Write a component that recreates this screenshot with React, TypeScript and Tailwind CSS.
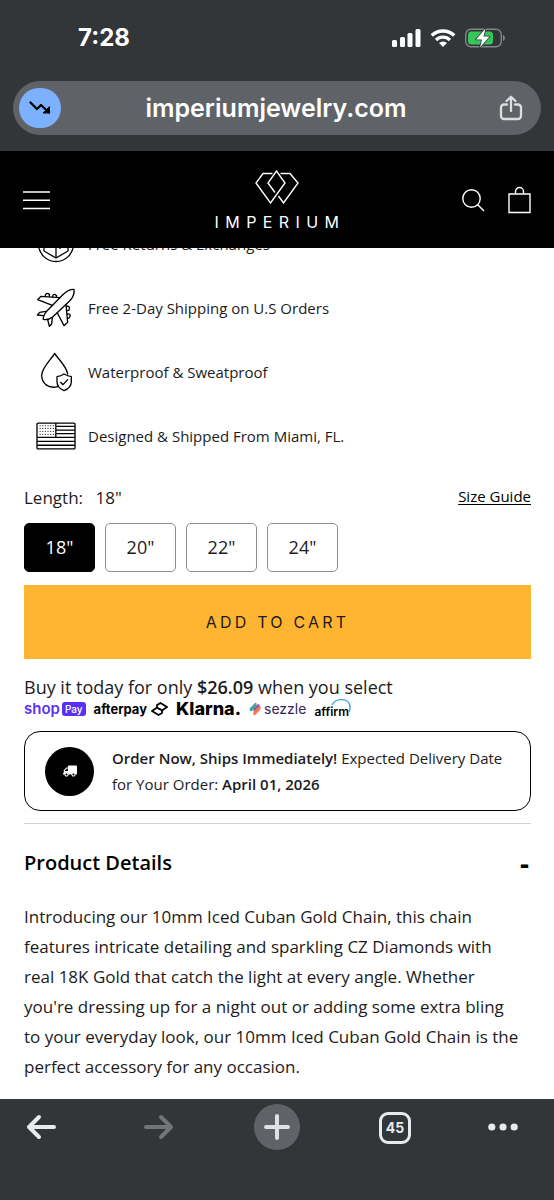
import { useState } from 'react';
import { FaTruck } from 'react-icons/fa';

const features = [
    { label: 'Free Returns & Exchanges', icon: <ReturnsIcon /> },
    { label: 'Free 2-Day Shipping on U.S Orders', icon: <PlaneIcon /> },
    { label: 'Waterproof & Sweatproof', icon: <DropIcon /> },
    { label: 'Designed & Shipped From Miami, FL.', icon: <FlagIcon /> },
];

const lengths = ['18"', '20"', '22"', '24"'];

function ReturnsIcon() {
    return (
        <svg viewBox="0 0 40 40" className="h-10 w-10" fill="none" stroke="black" strokeWidth="1.3">
            <circle cx="20" cy="20" r="17.5" />
            <path d="M20 7 32 13.500V27L20 34 8 27V13.500ZM8 13.500 20 20l12-6.500M20 20v14" />
            <path d="M24 25v-3l4-2" />
        </svg>
    );
}

function PlaneIcon() {
    return (
        <svg viewBox="48 57 120 120" className="h-10 w-10" fill="none" stroke="black" strokeWidth="4" strokeLinejoin="round" strokeLinecap="round">
            <path d="M162 61c2 14-4 26-14 36l-50 47c-9 7-19 9-28 7-1-9 4-17 10-24l50-51c9-9 19-16 32-15Z" />
            <path d="M119 86 63 82l-10 10 44 17" />
            <path d="M138 107l5 53-11 10-20-38" />
            <path d="M78 127l-19 3-7 8 18 2" />
            <path d="M97 146l-2 19-7 7-5-21" />
            <path d="M76 81c-1-5 4-9 9-7l3 2v6M98 84c-1-6 4-9 8-7l4 3-1 5" />
            <path d="M141 112c5-1 9 3 7 8l-2 4-4 1M143 135c5-1 9 3 7 7l-3 5-4 1" />
        </svg>
    );
}

function DropIcon() {
    return (
        <svg viewBox="48 250 120 120" className="h-10 w-10" fill="none" stroke="black" strokeWidth="4" strokeLinejoin="round" strokeLinecap="round">
            <path d="M113 354c-28 7-48-10-48-34 0-23 29-48 39-66 9 16 35 37 39 62" />
            <path d="M132 316c-7 5-13 7-21 8v15c0 13 8 21 21 27 14-6 22-14 22-27v-15c-8-1-15-4-22-8Z" />
            <path d="m122 341 7 7 14-15" />
        </svg>
    );
}

function FlagIcon() {
    return (
        <svg viewBox="46 461 121 84" className="h-7 w-10" fill="none" stroke="black" strokeWidth="4" strokeLinejoin="round">
            <rect x="49" y="464" width="115" height="78" rx="3" />
            <path d="M106 464v43M106 474h58M106 485h58M106 496h58M49 507h115M49 519h115M49 531h115" />
            <path d="M57 472h44M57 480h44M57 489h44M57 498h44" strokeWidth="3" strokeDasharray="3 5" />
        </svg>
    );
}

function StatusBar() {
    return (
        <div className="flex items-center justify-between px-[49px] pt-[24px] text-white">
            <span className="ml-[29px] text-[24px] leading-7 font-bold">7:28</span>
            <div className="flex items-center gap-[9px]">
                <svg viewBox="0 0 29 18" className="h-[18px] w-[29px]" fill="white">
                    <rect x="0" y="11" width="5" height="7" rx="1.500" />
                    <rect x="8" y="8" width="5" height="10" rx="1.500" />
                    <rect x="15.500" y="4" width="5" height="14" rx="1.500" />
                    <rect x="23.500" y="0" width="5" height="18" rx="1.500" />
                </svg>
                <svg viewBox="0 0 26 18" className="h-[18px] w-[26px]" fill="none" stroke="white" strokeWidth="3.400">
                    <path d="M1.800 6.500a16 16 0 0 1 22.400 0" />
                    <path d="M6 11a10 10 0 0 1 14 0" />
                    <path d="M13 18l-4-4a6 6 0 0 1 8 0Z" fill="white" stroke="none" />
                </svg>
                <svg viewBox="0 0 40 20" className="h-5 w-10">
                    <rect x="0.700" y="1.200" width="35.600" height="17.600" rx="5.500" fill="none" stroke="#84878a" strokeWidth="1.400" />
                    <path d="M38 7v6c2.500-1 2.500-5 0-6Z" fill="#84878a" />
                    <rect x="3" y="3.500" width="25" height="13" rx="3.500" fill="#34c759" />
                    <path d="M20.500.5 11 11.500h6l-2 8 9.500-11h-6Z" fill="white" stroke="#323639" strokeWidth="1.600" paintOrder="stroke" strokeLinejoin="round" />
                </svg>
            </div>
        </div>
    );
}

function AddressBar() {
    return (
        <div className="mx-[13px] mt-[29px] flex h-[54px] items-center justify-between rounded-full bg-[#5f6367] pr-[18px] pl-[6px]">
            <button aria-label="Price tracking" className="flex h-10 w-[42px] items-center justify-center rounded-full bg-[#7cb1ff]">
                <svg viewBox="0 0 22 14" className="h-[14px] w-[22px]" fill="none" stroke="black" strokeWidth="2.300" strokeLinecap="round" strokeLinejoin="round">
                    <path d="m1.500 1.500 6.500 6.500 4-4 8 7.500" />
                    <path d="M20.500 6v6h-6Z" fill="black" strokeWidth="1" />
                </svg>
            </button>
            <span className="pr-2 text-[25px] leading-8 font-semibold text-white">imperiumjewelry.com</span>
            <button aria-label="Share" className="flex h-10 w-6 items-center justify-center">
                <svg viewBox="0 0 24 26" className="h-[26px] w-6" fill="none" stroke="#dcdee0" strokeWidth="2.300" strokeLinecap="round" strokeLinejoin="round">
                    <path d="M8 9.500H5a3 3 0 0 0-3 3V21a3 3 0 0 0 3 3h14a3 3 0 0 0 3-3v-8.500a3 3 0 0 0-3-3h-3" />
                    <path d="M12 16V2M7.500 6 12 1.800 16.500 6" />
                </svg>
            </button>
        </div>
    );
}

function StoreHeader() {
    return (
        <header className="grid h-[97px] grid-cols-3 items-center bg-black px-[23px] pt-px text-white">
            <button aria-label="Open menu" className="justify-self-start">
                <svg viewBox="0 0 27 20" className="h-5 w-[27px]" stroke="white" strokeWidth="1.500">
                    <path d="M0 2h27M0 10.200h27M0 18.500h27" />
                </svg>
            </button>
            <a href="#" className="flex flex-col items-center gap-[10px]">
                <svg viewBox="0 0 44 34" className="h-[34px] w-11" fill="none" stroke="white" strokeWidth="1.400">
                    <path d="M17.500 3.500H8L1 13l14.500 20L30 13 21.500 1 13 13l7 9.500" />
                    <path d="M25.500 3.500H35L43 13 28.500 33l-5-7" />
                </svg>
                <span className="pl-1.5 font-[Inter] text-[16px] leading-4 tracking-[0.4em]">IMPERIUM</span>
            </a>
            <div className="flex items-center gap-[22px] justify-self-end">
                <button aria-label="Search">
                    <svg viewBox="0 0 24 24" className="h-6 w-6" fill="none" stroke="white" strokeWidth="1.400">
                        <circle cx="10.500" cy="10.500" r="8.700" />
                        <path d="m16.500 16.500 6.500 6.500" />
                    </svg>
                </button>
                <button aria-label="Cart">
                    <svg viewBox="0 0 24 28" className="h-7 w-6" fill="none" stroke="white" strokeWidth="1.400">
                        <path d="M2 8h21v18.500H2ZM8.500 8V5.500a4 4 0 0 1 8 0V8" />
                    </svg>
                </button>
            </div>
        </header>
    );
}

function PaymentLogos() {
    return (
        <div className="flex h-5 items-center font-[Inter] text-black">
            <span className="text-[15px] leading-4 font-semibold text-[#5a31f4]">shop</span>
            <span className="ml-0.5 rounded-[3px] bg-[#5a31f4] px-[3px] text-[10px] leading-[14px] font-medium text-white">Pay</span>
            <span className="ml-2 text-[13px] leading-4 font-bold">afterpay</span>
            <svg viewBox="0 0 17 16" className="ml-1 h-4 w-[17px]" fill="none" stroke="black" strokeWidth="1.800" strokeLinejoin="round">
                <path d="M6 6V4l3.500-2L16 6l-5 3.500-3-2" />
                <path d="M11 9.500v2.500L7.500 14 1 10l5-3.500 3 2" />
            </svg>
            <span className="ml-2 text-[18px] leading-5 font-extrabold">Klarna.</span>
            <svg viewBox="0 0 12 14" className="ml-2 h-[14px] w-3">
                <path d="M1 6 6 1c2-1 2 2 1 3L3 9C1 10 0 8 1 6Z" fill="#3aab8f" />
                <path d="M5 6 9 2c2 0 2 3 1 4L6 10C4 10 4 8 5 6Z" fill="#8b4fc2" />
                <path d="m5 9 5-5c2-1 2 2 1 4l-5 5c-2 1-2-2-1-4Z" fill="#f4774c" />
            </svg>
            <span className="ml-[3px] text-[14px] leading-4 text-[#392558]">sezzle</span>
            <span className="relative ml-2 pt-1.5 text-[12px] leading-4 font-semibold">
                affirm
                <svg viewBox="0 0 20 15" className="absolute top-0 -right-[2px] h-[15px] w-5" fill="none" stroke="#3b9fe6" strokeWidth="1.400">
                    <path d="M1 7C4 0 19-1 19 9c0 2 0 3-1 5" />
                </svg>
            </span>
        </div>
    );
}

function BrowserToolbar() {
    return (
        <nav className="grid h-[101px] grid-cols-[82fr_154fr_82fr_154fr_62fr_20fr] items-start justify-items-center bg-[#323639] pt-[5px] font-[Inter]">
            <button aria-label="Back" className="flex h-[46px] items-center">
                <svg viewBox="0 0 30 26" className="h-[26px] w-[30px]" fill="none" stroke="#e8eaed" strokeWidth="4" strokeLinecap="round" strokeLinejoin="round">
                    <path d="M28 13H3M13 3 3 13l10 10" />
                </svg>
            </button>
            <button aria-label="Forward" className="flex h-[46px] items-center">
                <svg viewBox="0 0 30 26" className="h-[26px] w-[30px]" fill="none" stroke="#737475" strokeWidth="4" strokeLinecap="round" strokeLinejoin="round">
                    <path d="M2 13h25M17 3l10 10-10 10" />
                </svg>
            </button>
            <button aria-label="New tab" className="flex h-[46px] w-[46px] items-center justify-center rounded-full bg-[#5f6367]">
                <svg viewBox="0 0 26 26" className="h-[26px] w-[26px]" stroke="#dfe1e4" strokeWidth="4" strokeLinecap="round">
                    <path d="M13 2v22M2 13h22" />
                </svg>
            </button>
            <button aria-label="Tabs" className="mt-2 flex h-8 w-8 items-center justify-center rounded-[9px] border-[3px] border-[#e8eaed] text-[14px] leading-4 font-bold text-[#e8eaed]">
                45
            </button>
            <button aria-label="More" className="flex h-[46px] items-center">
                <svg viewBox="0 0 30 8" className="h-2 w-[30px]" fill="#e8eaed">
                    <circle cx="3.800" cy="4" r="3.600" />
                    <circle cx="15" cy="4" r="3.600" />
                    <circle cx="26.200" cy="4" r="3.600" />
                </svg>
            </button>
        </nav>
    );
}

export default function App() {
    const [length, setLength] = useState('18"');
    const [open, setOpen] = useState(true);

    return (
        <div className="flex min-h-screen flex-col bg-white font-['Open_Sans',sans-serif] text-[#1c1b1b]">
            <div className="bg-[#323639] pb-4 font-[Inter]">
                <StatusBar />
                <AddressBar />
            </div>
            <StoreHeader />

            <main className="flex-1 overflow-hidden pr-[23px] pl-6">
                <ul className="-mt-9">
                    {features.map((feature) => (
                        <li key={feature.label} className="flex h-16 items-center gap-3 pl-3 text-[15px]">
                            {feature.icon}
                            <span>{feature.label}</span>
                        </li>
                    ))}
                </ul>

                <div className="mt-4 flex items-start justify-between">
                    <p className="text-[17px] leading-7">
                        Length: <span className="ml-2">{length}</span>
                    </p>
                    <a href="#" className="text-[15px] leading-6 text-black underline underline-offset-2">Size Guide</a>
                </div>

                <div className="mt-[11px] flex gap-[10px]">
                    {lengths.map((item) => (
                        <button
                            key={item}
                            onClick={() => setLength(item)}
                            aria-pressed={length === item}
                            className={`h-[49px] w-[71px] rounded-[5px] border text-[18px] ${
                                length === item ? 'border-black bg-black text-white' : 'border-[#8e8e8e] bg-white'
                            }`}
                        >
                            {item}
                        </button>
                    ))}
                </div>

                <button className="mt-[13px] h-[74px] w-full bg-[#ffb531] font-[Inter] text-[16px] tracking-[0.2em]">
                    ADD TO CART
                </button>

                <p className="mt-4 text-[18px] leading-6">
                    Buy it today for only <strong className="font-semibold">$26.09</strong> when you select
                </p>
                <PaymentLogos />

                <div className="mt-3 flex items-center gap-[18px] rounded-2xl border-[1.5px] border-black py-[13px] pr-4 pl-5">
                    <div className="flex h-[49px] w-[49px] shrink-0 items-center justify-center rounded-full bg-black text-white">
                        <FaTruck className="h-3.5 w-3.5 -scale-x-100" />
                    </div>
                    <p className="text-[15px] leading-[26px]">
                        <strong className="font-semibold">Order Now, Ships Immediately!</strong> Expected Delivery Date for Your Order:{' '}
                        <strong className="font-semibold">April 01, 2026</strong>
                    </p>
                </div>

                <section className="mt-3 border-t border-[#d4d4d4] pt-6">
                    <h2>
                        <button
                            onClick={() => setOpen(!open)}
                            aria-expanded={open}
                            className="flex w-full items-center justify-between text-[20px] leading-[30px] font-semibold text-black"
                        >
                            Product Details
                            <span className="pr-0.5 text-[28px] font-bold">{open ? '-' : '+'}</span>
                        </button>
                    </h2>
                    {open && (
                        <p className="mt-6 pr-2.5 pb-4 text-[17px] leading-[30px]">
                            Introducing our 10mm Iced Cuban Gold Chain, this chain features intricate detailing and sparkling CZ Diamonds with real 18K Gold that catch the light at every angle. Whether you're dressing up for a night out or adding some extra bling to your everyday look, our 10mm Iced Cuban Gold Chain is the perfect accessory for any occasion.
                        </p>
                    )}
                </section>
            </main>

            <BrowserToolbar />
        </div>
    );
}
